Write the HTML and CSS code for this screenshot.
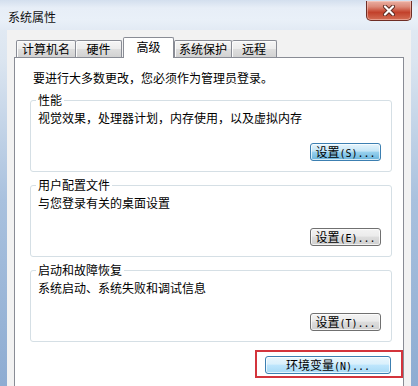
FILE: index.html
```html
<!DOCTYPE html>
<html lang="zh-CN">
<head>
<meta charset="utf-8">
<title>系统属性</title>
<link rel="stylesheet" href="styles.css">
</head>
<body>
<div class="window">
  <div class="titlebar">
    <span class="title">系统属性</span>
    <div class="close">
      <svg width="14" height="11" viewBox="0 0 14 11">
        <path d="M3 1.5 L11 9.5 M11 1.5 L3 9.5" stroke="#5b2a22" stroke-width="4" stroke-linecap="round" fill="none"/>
        <path d="M3 1.5 L11 9.5 M11 1.5 L3 9.5" stroke="#ffffff" stroke-width="2.2" stroke-linecap="round" fill="none"/>
      </svg>
    </div>
  </div>
  <div class="client">
    <div class="tabs">
      <div class="tab t1">计算机名</div>
      <div class="tab t2">硬件</div>
      <div class="tab sel">高级</div>
      <div class="tab t4">系统保护</div>
      <div class="tab t5">远程</div>
    </div>
    <div class="panel">
      <p class="intro">要进行大多数更改，您必须作为管理员登录。</p>
      <fieldset class="group">
        <legend>性能</legend>
        <p class="desc">视觉效果，处理器计划，内存使用，以及虚拟内存</p>
        <div class="btnrow"><button class="btn hot">设置<span class="acc">(S)...</span></button></div>
      </fieldset>
      <fieldset class="group">
        <legend>用户配置文件</legend>
        <p class="desc">与您登录有关的桌面设置</p>
        <div class="btnrow"><button class="btn">设置<span class="acc">(E)...</span></button></div>
      </fieldset>
      <fieldset class="group">
        <legend>启动和故障恢复</legend>
        <p class="desc">系统启动、系统失败和调试信息</p>
        <div class="btnrow"><button class="btn">设置<span class="acc">(T)...</span></button></div>
      </fieldset>
      <div class="envrow">
        <div class="mark"><button class="btn env">环境变量<span class="acc">(N)...</span></button></div>
      </div>
    </div>
  </div>
</div>
</body>
</html>
```
FILE: styles.css
```css
* { box-sizing: border-box; }
html, body { margin: 0; padding: 0; }
body {
  width: 418px;
  height: 386px;
  overflow: hidden;
  font-family: "Noto Sans CJK SC", sans-serif;
  font-size: 12px;
  color: #000;
  background: #a9c0dc;
}
.window {
  width: 418px;
  height: 386px;
  display: flex;
  flex-direction: column;
  background: linear-gradient(to bottom, #e6edf5 0, #dbe5f0 60px, #a9c1de 200px, #8eacd2 386px);
}
.titlebar {
  height: 30px;
  flex: none;
  display: flex;
  justify-content: space-between;
  align-items: flex-start;
  padding: 0 6px 0 8px;
  background: linear-gradient(to bottom, #d3dfee 0, #e7eef7 8px, #e9f0f8 20px, #e2eaf4 30px);
}
.title {
  margin-top: 9px;
  line-height: 16px;
  font-size: 12px;
  color: #111;
}
.close {
  margin-top: 1px;
  width: 46px;
  height: 20px;
  border: 1px solid #6e2d25;
  border-top: none;
  border-radius: 0 0 5px 5px;
  background: linear-gradient(to bottom, #eab0a3 0, #dc8a79 30%, #cc5843 50%, #c2412b 60%, #d46e55 100%);
  box-shadow: inset 0 0 0 1px rgba(255, 220, 210, 0.45);
  display: flex;
  align-items: center;
  justify-content: center;
}
.close svg { display: block; }
.client {
  flex: 1;
  margin: 0 7px;
  padding: 0 7px;
  background: #f2f2f2;
  display: flex;
  flex-direction: column;
  min-height: 0;
}
.tabs {
  height: 27px;
  flex: none;
  display: flex;
  align-items: flex-end;
  padding-left: 2px;
  position: relative;
  z-index: 1;
}
.tab {
  height: 17px;
  border: 1px solid #898c95;
  border-bottom: none;
  border-radius: 2px 2px 0 0;
  background: linear-gradient(to bottom, #f5f5f5 0, #ececec 50%, #dedede 51%, #d2d2d2 100%);
  box-shadow: inset 1px 1px 0 #fcfcfc;
  text-align: center;
  line-height: 16px;
  font-size: 12px;
  color: #000;
}
.t1 { width: 60px; }
.t2 { width: 46px; border-left: none; }
.t4 { width: 58px; }
.t5 { width: 45px; border-left: none; }
.sel {
  width: 51px;
  height: 21px;
  margin-left: 1px;
  margin-bottom: -1px;
  background: #fff;
  box-shadow: none;
  padding-top: 1px;
  line-height: 16px;
}
.panel {
  flex: 1;
  border: 1px solid #898c95;
  border-bottom: none;
  background: #fff;
  padding: 12px 11px 0 15px;
  min-height: 0;
}
.intro {
  margin: 0 0 7px 3px;
  line-height: 16px;
}
.group {
  margin: 0 0 6px 0;
  padding: 3px 10px 10px 7px;
  border: 1px solid #d5dfe5;
  border-radius: 3px;
  box-shadow: inset 1px 1px 0 #fff;
  min-inline-size: 0;
}
.group legend {
  padding: 0 2px;
  margin-left: -2px;
  line-height: 14px;
}
.desc {
  margin: 0;
  line-height: 16px;
}
.btnrow {
  display: flex;
  justify-content: flex-end;
  margin-top: 17px;
}
.btn {
  width: 71px;
  height: 18px;
  padding: 0;
  border: 1px solid #707070;
  border-radius: 3px;
  background: linear-gradient(to bottom, #f3f3f3 0, #ebebeb 45%, #dddddd 50%, #cfcfcf 100%);
  box-shadow: inset 0 0 0 1px rgba(255, 255, 255, 0.7);
  font-family: "Noto Sans CJK SC", sans-serif;
  font-size: 12px;
  line-height: 16px;
  color: #000;
  white-space: nowrap;
}
.btn.hot {
  border-color: #3c7fb1;
  background: linear-gradient(to bottom, #e5f4fc 0, #c4e5f6 45%, #98d1ef 50%, #68b3db 100%);
}
.btn.env {
  width: 126px;
  border-color: #3c7fb1;
  background: linear-gradient(to bottom, #eaf6fd 0, #d9f0fc 45%, #bee6fd 50%, #a7d9f5 100%);
}
.acc {
  font-family: "DejaVu Sans Mono", monospace;
  font-size: 10px;
  letter-spacing: 0;
}
.envrow {
  display: flex;
  justify-content: flex-end;
  margin-top: 8px;
  margin-right: -11px;
}
.mark {
  border: 2px solid #d3343c;
  padding: 4px 10px 2px 8px;
}
.mark .btn { display: block; }
```
